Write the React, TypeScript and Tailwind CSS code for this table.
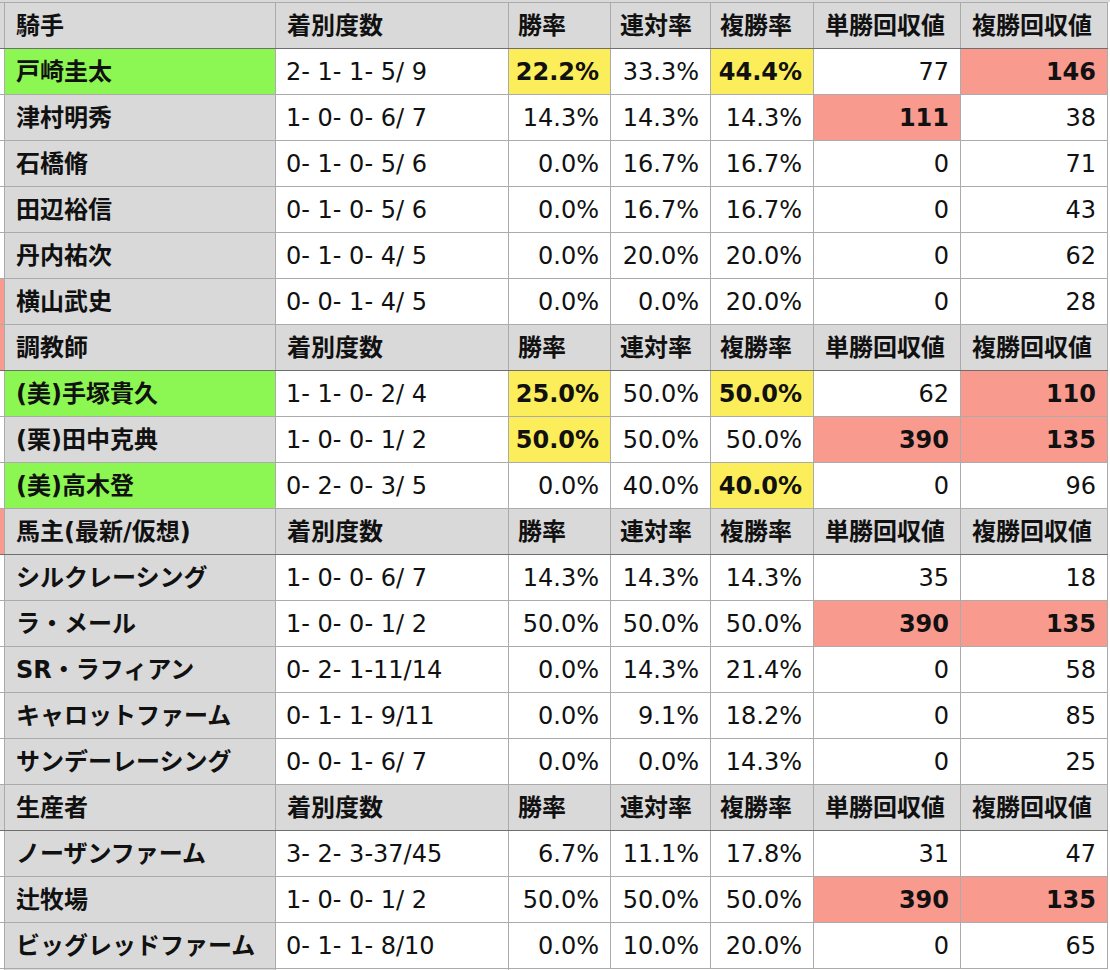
import React from "react";

type Hl = "y" | "s" | undefined;
type Cell = { v: string; hl?: Hl };
type Row =
  | { kind: "head"; label: string; strip?: boolean }
  | { kind: "data"; name: string; green?: boolean; strip?: boolean; rec: string; cells: Cell[] };

const c = (v: string, hl?: Hl): Cell => ({ v, hl });

const rows: Row[] = [
  { kind: "head", label: "騎手" },
  { kind: "data", name: "戸崎圭太", green: true, rec: "2- 1- 1- 5/ 9", cells: [c("22.2%", "y"), c("33.3%"), c("44.4%", "y"), c("77"), c("146", "s")] },
  { kind: "data", name: "津村明秀", rec: "1- 0- 0- 6/ 7", cells: [c("14.3%"), c("14.3%"), c("14.3%"), c("111", "s"), c("38")] },
  { kind: "data", name: "石橋脩", rec: "0- 1- 0- 5/ 6", cells: [c("0.0%"), c("16.7%"), c("16.7%"), c("0"), c("71")] },
  { kind: "data", name: "田辺裕信", rec: "0- 1- 0- 5/ 6", cells: [c("0.0%"), c("16.7%"), c("16.7%"), c("0"), c("43")] },
  { kind: "data", name: "丹内祐次", rec: "0- 1- 0- 4/ 5", cells: [c("0.0%"), c("20.0%"), c("20.0%"), c("0"), c("62")] },
  { kind: "data", name: "横山武史", strip: true, rec: "0- 0- 1- 4/ 5", cells: [c("0.0%"), c("0.0%"), c("20.0%"), c("0"), c("28")] },
  { kind: "head", label: "調教師", strip: true },
  { kind: "data", name: "(美)手塚貴久", green: true, rec: "1- 1- 0- 2/ 4", cells: [c("25.0%", "y"), c("50.0%"), c("50.0%", "y"), c("62"), c("110", "s")] },
  { kind: "data", name: "(栗)田中克典", rec: "1- 0- 0- 1/ 2", cells: [c("50.0%", "y"), c("50.0%"), c("50.0%"), c("390", "s"), c("135", "s")] },
  { kind: "data", name: "(美)高木登", green: true, rec: "0- 2- 0- 3/ 5", cells: [c("0.0%"), c("40.0%"), c("40.0%", "y"), c("0"), c("96")] },
  { kind: "head", label: "馬主(最新/仮想)", strip: true },
  { kind: "data", name: "シルクレーシング", rec: "1- 0- 0- 6/ 7", cells: [c("14.3%"), c("14.3%"), c("14.3%"), c("35"), c("18")] },
  { kind: "data", name: "ラ・メール", rec: "1- 0- 0- 1/ 2", cells: [c("50.0%"), c("50.0%"), c("50.0%"), c("390", "s"), c("135", "s")] },
  { kind: "data", name: "SR・ラフィアン", rec: "0- 2- 1-11/14", cells: [c("0.0%"), c("14.3%"), c("21.4%"), c("0"), c("58")] },
  { kind: "data", name: "キャロットファーム", rec: "0- 1- 1- 9/11", cells: [c("0.0%"), c("9.1%"), c("18.2%"), c("0"), c("85")] },
  { kind: "data", name: "サンデーレーシング", rec: "0- 0- 1- 6/ 7", cells: [c("0.0%"), c("0.0%"), c("14.3%"), c("0"), c("25")] },
  { kind: "head", label: "生産者" },
  { kind: "data", name: "ノーザンファーム", rec: "3- 2- 3-37/45", cells: [c("6.7%"), c("11.1%"), c("17.8%"), c("31"), c("47")] },
  { kind: "data", name: "辻牧場", rec: "1- 0- 0- 1/ 2", cells: [c("50.0%"), c("50.0%"), c("50.0%"), c("390", "s"), c("135", "s")] },
  { kind: "data", name: "ビッグレッドファーム", rec: "0- 1- 1- 8/10", cells: [c("0.0%"), c("10.0%"), c("20.0%"), c("0"), c("65")] },
];

const heads = ["着別度数", "勝率", "連対率", "複勝率", "単勝回収値", "複勝回収値"];
const statW = ["w-[102px]", "w-[100px]", "w-[103px]", "w-[147px]", "w-[147px]"];

// 45px cell + 1px bottom border = 46px per row
const base = "h-[45px] shrink-0 border-r border-[#ababab] flex items-center";

function HeadRow({ label, strip }: { label: string; strip?: boolean }) {
  return (
    <div className="flex border-b border-[#6e6e6e] font-bold">
      <div className={`${base} w-[5px] ${strip ? "bg-[#f99a8f]" : "bg-[#d9d9d9]"}`} />
      <div className={`${base} w-[271px] bg-[#d9d9d9] pl-[11px]`}>{label}</div>
      <div className={`${base} w-[233px] bg-[#d9d9d9] pl-[11px]`}>{heads[0]}</div>
      {heads.slice(1).map((h, i) => (
        <div key={h} className={`${base} ${statW[i]} bg-[#d9d9d9] ${i < 3 ? "pl-[9px]" : "pl-[11px]"}`}>
          {h}
        </div>
      ))}
    </div>
  );
}

function DataRow({ row }: { row: Extract<Row, { kind: "data" }> }) {
  return (
    <div className="flex border-b border-[#ababab]">
      <div className={`${base} w-[5px] ${row.strip ? "bg-[#f99a8f]" : "bg-white"}`} />
      <div className={`${base} w-[271px] pl-[11px] font-bold ${row.green ? "bg-[#8cf652]" : "bg-[#d9d9d9]"}`}>
        {row.name}
      </div>
      <div className={`${base} w-[233px] pl-[10px] whitespace-pre bg-white`}>{row.rec}</div>
      {row.cells.map((cell, i) => (
        <div
          key={i}
          className={`${base} ${statW[i]} justify-end pr-[11px] ${
            cell.hl === "y" ? "bg-[#fcee5a] font-bold" : cell.hl === "s" ? "bg-[#f99a8f] font-bold" : "bg-white"
          }`}
        >
          {cell.v}
        </div>
      ))}
    </div>
  );
}

export default function App() {
  return (
    <div
      className="w-[1110px] h-[970px] overflow-hidden bg-white text-[24px] leading-none text-[#111]"
      style={{ fontFamily: '"DejaVu Sans", "Noto Sans CJK JP", sans-serif' }}
    >
      <div className="h-[2px] bg-[#d9d9d9]" />
      <div className="w-[1108px] border-t border-[#ababab]">
        {rows.map((r, i) =>
          r.kind === "head" ? <HeadRow key={i} label={r.label} strip={r.strip} /> : <DataRow key={i} row={r} />
        )}
        <div className="flex">
          <div className={`${base} w-[5px] bg-white`} />
          <div className={`${base} w-[271px] bg-[#d9d9d9]`} />
          <div className={`${base} w-[233px] bg-white`} />
        </div>
      </div>
    </div>
  );
}
